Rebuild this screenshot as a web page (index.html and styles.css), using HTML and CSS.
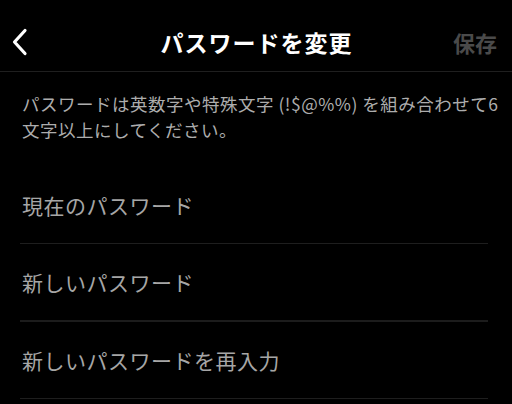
FILE: index.html
```html
<!DOCTYPE html>
<html lang="ja">
<head>
<meta charset="utf-8">
<link rel="stylesheet" href="styles.css">
</head>
<body>
<header class="topbar">
  <button class="back" aria-label="戻る">
    <svg width="18" height="28" viewBox="0 0 18 28"><path d="M14 2.5 L3.5 14 L14 25.5" fill="none" stroke="#fff" stroke-width="3.2" stroke-linecap="round" stroke-linejoin="round"/></svg>
  </button>
  <h1 class="title">パスワードを変更</h1>
  <span class="save">保存</span>
</header>
<p class="hint">パスワードは英数字や特殊文字 (!$@%%) を組み合わせて6文字以上にしてください。</p>
<div class="fields">
  <div class="field">現在のパスワード</div>
  <div class="field thick">新しいパスワード</div>
  <div class="field">新しいパスワードを再入力</div>
</div>
</body>
</html>
```
FILE: styles.css
```css
html, body {
  margin: 0;
  padding: 0;
  background: #000;
}
body {
  font-family: "Noto Sans CJK JP", "Noto Sans", sans-serif;
  color: #fff;
  width: 512px;
  height: 404px;
  overflow: hidden;
}
.topbar {
  box-sizing: border-box;
  height: 72px;
  padding-top: 12px;
  border-bottom: 1px solid #1f1f1f;
  display: grid;
  grid-template-columns: 1fr auto 1fr;
  align-items: center;
}
.back {
  justify-self: start;
  background: none;
  border: 0;
  padding: 0;
  margin-left: 11px;
  width: 18px;
  height: 28px;
  display: flex;
}
.title {
  margin: 0;
  text-align: center;
  font-size: 23px;
  font-weight: 700;
  color: #fff;
  letter-spacing: 1px;
  margin-right: -1px;
}
.save {
  justify-self: end;
  font-size: 22px;
  font-weight: 700;
  color: #4a4a4a;
  margin-right: 15px;
}
.hint {
  margin: 19px 8px 0 22px;
  font-size: 17.5px;
  line-height: 25.5px;
  letter-spacing: 0.5px;
  color: #adadad;
}
.fields {
  margin: 25px 24px 0 20px;
}
.field {
  height: 76px;
  border-bottom: 1px solid #1e1e1e;
  display: flex;
  align-items: center;
  padding-left: 2px;
  font-size: 21px;
  letter-spacing: 0.5px;
  color: #a6a6a6;
}
.field.thick {
  border-bottom: 2px solid #1c1c1c;
}
```
